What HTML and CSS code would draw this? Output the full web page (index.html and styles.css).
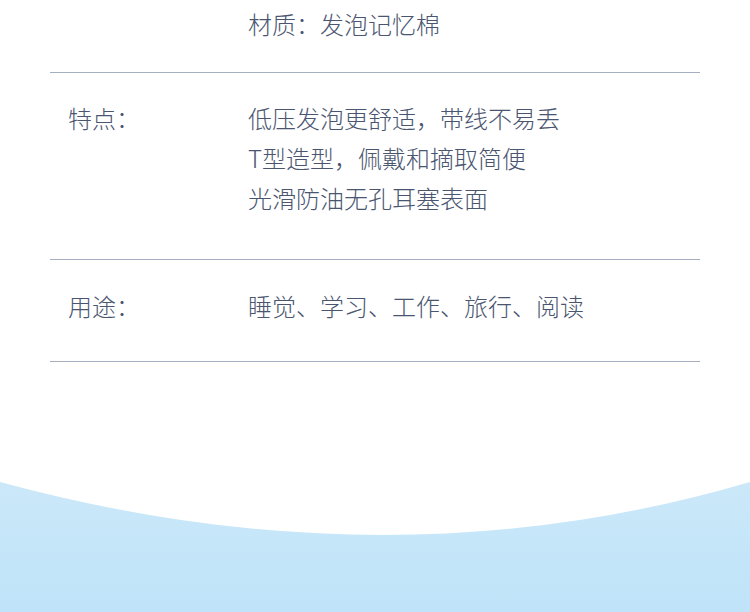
FILE: index.html
```html
<!DOCTYPE html>
<html>
  <head>
    <title>产品参数</title>
    <link rel="stylesheet" href="styles.css">
  </head>
  <body>
    <div class="spec-list">
      <div class="spec-row first-row">
        <div class="spec-label"></div>
        <div class="spec-value">材质：发泡记忆棉</div>
      </div>
      <div class="spec-row feature-row">
        <div class="spec-label">特点：</div>
        <div class="spec-value">
          <p>低压发泡更舒适，带线不易丢</p>
          <p>T型造型，佩戴和摘取简便</p>
          <p>光滑防油无孔耳塞表面</p>
        </div>
      </div>
      <div class="spec-row usage-row">
        <div class="spec-label">用途：</div>
        <div class="spec-value">睡觉、学习、工作、旅行、阅读</div>
      </div>
    </div>

    <div class="wave">
      <svg width="750" height="130" viewBox="0 0 750 130" preserveAspectRatio="none">
        <defs>
          <linearGradient id="waveFill" x1="0" y1="0" x2="0" y2="1">
            <stop offset="0" stop-color="#cbe8f9" />
            <stop offset="1" stop-color="#bfe3f9" />
          </linearGradient>
        </defs>
        <path d="M0 0 Q390 106 750 0 L750 130 L0 130 Z" fill="url(#waveFill)" />
      </svg>
    </div>
  </body>
</html>
```

FILE: styles.css
```css
body {
  margin: 0;
  background: #fff;
  font-family: "Noto Sans CJK SC", "Noto Sans", sans-serif;
  font-weight: 300;
  color: #4a5670;
  overflow: hidden;
}

.spec-list {
  margin: 0 50px;
}

.spec-row {
  display: grid;
  grid-template-columns: 180px 1fr;
  padding-left: 18px;
  border-bottom: 1px solid #a3afc0;
  font-size: 24px;
  line-height: 40px;
}

.spec-value p {
  margin: 0;
}

.first-row {
  padding-top: 4px;
  padding-bottom: 28px;
}

.feature-row {
  padding-top: 25px;
  padding-bottom: 41px;
}

.usage-row {
  padding-top: 26px;
  padding-bottom: 35px;
}

.wave {
  margin-top: 120px;
  height: 130px;
  line-height: 0;
}

.wave svg {
  display: block;
}
```
